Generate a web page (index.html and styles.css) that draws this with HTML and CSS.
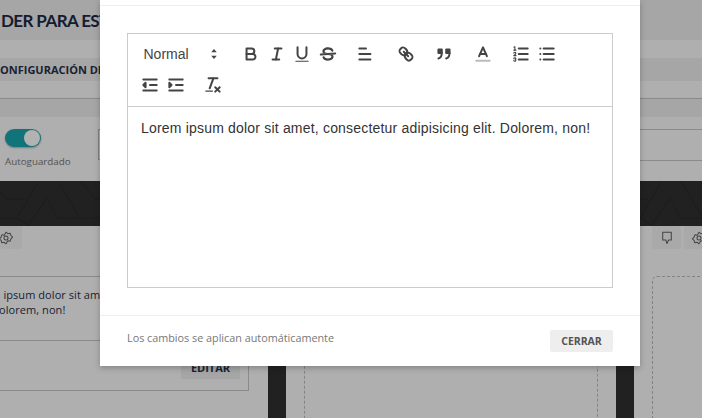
FILE: index.html
```html
<!DOCTYPE html>
<html lang="es">
<head>
<meta charset="utf-8">
<title>Editor</title>
<link rel="stylesheet" href="styles.css">
</head>
<body>
<div class="page">
  <header class="title-bar"><h1 class="title">DER PARA ESTE</h1></header>
  <section class="config">
    <span class="config-label">CONFIGURACIÓN DE</span>
  </section>
  <div class="strip"></div>
  <section class="controls">
    <div class="auto">
      <span class="toggle"><span class="knob"></span></span>
      <span class="auto-label">Autoguardado</span>
    </div>
    <div class="ctl-box"></div>
    <div class="ctl-lines"></div>
  </section>
  <div class="hero">
    <svg class="hero-art" width="702" height="45">
      <defs>
        <pattern id="hex" width="89" height="45" patternUnits="userSpaceOnUse">
          <path d="M6 18H25M0 37H17L38 1M17 37L30 45M47 17L28 45M47 17L57 37H89M58 0L80 37M80 0L89 10M0 10L6 18" class="hex-line"/>
        </pattern>
      </defs>
      <rect width="702" height="45" fill="url(#hex)"/>
    </svg>
  </div>
  <main class="board">
    <div class="col col-a">
      <div class="tools">
        <span class="tool tool-a">
          <svg class="tool-ic" viewBox="0 0 18 18"><circle class="tl" cx="9" cy="9" r="2.600"/><path class="tl" d="M9 1.500l2.300 2 3-.6 1 2.900 2.200 2.200-2.200 2.200-1 2.900-3-.6L9 16.500l-2.300-2-3 .6-1-2.900L.500 10l2.200-2.200 1-2.900 3 .6z"/></svg>
        </span>
      </div>
      <article class="card">
        <p class="card-text"><span class="line">Lorem ipsum dolor sit amet,</span><span class="line line-two">Dolorem, non!</span></p>
        <div class="card-foot"><span class="edit">EDITAR</span></div>
      </article>
    </div>
    <div class="col col-b"><div class="drop"></div></div>
    <div class="col col-c">
      <div class="tools tools-c">
        <span class="tool">
          <svg class="tool-ic" viewBox="0 0 18 18"><path class="tl" d="M3.500 1.500h11v10h-3.500l-2 4.500-1.500-4.500H3.500z"/></svg>
        </span>
        <span class="tool">
          <svg class="tool-ic" viewBox="0 0 18 18"><circle class="tl" cx="9" cy="9" r="2.600"/><path class="tl" d="M9 1.500l2.300 2 3-.6 1 2.900 2.200 2.200-2.200 2.200-1 2.900-3-.6L9 16.500l-2.300-2-3 .6-1-2.900L.500 10l2.200-2.200 1-2.900 3 .6z"/></svg>
        </span>
      </div>
      <div class="drop drop-c"></div>
    </div>
  </main>
</div>
<div class="overlay"></div>
<div class="modal">
  <div class="modal-head"></div>
  <div class="modal-body">
    <div class="editor">
      <div class="toolbar">
        <div class="tb-row">
          <div class="picker">
            <span class="picker-label">Normal</span>
            <svg class="ic picker-arrows" viewBox="0 0 18 18"><polygon class="fl" points="6.500 10.500 9 13.500 11.500 10.500"/><polygon class="fl" points="6.500 7.500 9 4.500 11.500 7.500"/></svg>
          </div>
          <div class="grp">
            <span class="btn"><svg class="ic" viewBox="0 0 18 18"><path class="st" d="M5,4H9.500A2.500,2.500,0,0,1,12,6.500v0A2.500,2.500,0,0,1,9.500,9H5A0,0,0,0,1,5,9V4A0,0,0,0,1,5,4Z"/><path class="st" d="M5,9h5.500A2.500,2.500,0,0,1,13,11.500v0A2.500,2.500,0,0,1,10.500,14H5a0,0,0,0,1,0,0V9A0,0,0,0,1,5,9Z"/></svg></span>
            <span class="btn"><svg class="ic" viewBox="0 0 18 18"><line class="st" x1="7" x2="13" y1="4" y2="4"/><line class="st" x1="5" x2="11" y1="14" y2="14"/><line class="st" x1="8" x2="10" y1="14" y2="4"/></svg></span>
            <span class="btn"><svg class="ic" viewBox="0 0 18 18"><path class="st" d="M5,3V9a4.012,4.012,0,0,0,4,4H9a4.012,4.012,0,0,0,4-4V3"/><rect class="fl" height="1" rx="0.500" ry="0.500" width="12" x="3" y="15"/></svg></span>
            <span class="btn"><svg class="ic" viewBox="0 0 18 18"><line class="st" x1="15.500" x2="2.500" y1="8.500" y2="9.500"/><path class="fl" d="M9.007,8C6.542,7.791,6,7.519,6,6.500,6,5.792,7.283,5,9,5c1.571,0,2.765.679,2.969,1.309a1,1,0,0,0,1.900-.617C13.356,4.106,11.354,3,9,3,6.200,3,4,4.538,4,6.500a3.200,3.200,0,0,0,.5,1.843Z"/><path class="fl" d="M8.984,10C11.457,10.208,12,10.479,12,11.500c0,.708-1.283,1.500-3,1.500-1.571,0-2.765-.679-2.969-1.309a1,1,0,1,0-1.900.617C4.644,13.894,6.646,15,9,15c2.800,0,5-1.538,5-3.500a3.200,3.200,0,0,0-.5-1.843Z"/></svg></span>
          </div>
          <div class="grp grp-align">
            <span class="btn"><svg class="ic" viewBox="0 0 18 18"><line class="st" x1="3" x2="13" y1="9" y2="9"/><line class="st" x1="3" x2="13" y1="14" y2="14"/><line class="st" x1="3" x2="9" y1="4" y2="4"/></svg></span>
          </div>
          <div class="grp">
            <span class="btn"><svg class="ic" viewBox="0 0 18 18"><line class="st" x1="7" x2="11" y1="7" y2="11"/><path class="st" d="M8.900,4.577a3.476,3.476,0,0,1,.36,4.679A3.476,3.476,0,0,1,4.577,8.900C3.185,7.500,2.035,6.400,4.217,4.217S7.500,3.185,8.900,4.577Z"/><path class="st" d="M13.423,9.100a3.476,3.476,0,0,0-4.679-.36,3.476,3.476,0,0,0,.36,4.679c1.392,1.392,2.500,2.542,4.679.36S14.815,10.500,13.423,9.100Z"/></svg></span>
          </div>
          <div class="grp">
            <span class="btn"><svg class="ic" viewBox="0 0 18 18"><rect class="fl st" height="3" width="3" x="4" y="5"/><rect class="fl st" height="3" width="3" x="11" y="5"/><path class="st" d="M7,8c0,4.031-3,5-3,5"/><path class="st" d="M14,8c0,4.031-3,5-3,5"/></svg></span>
          </div>
          <div class="grp">
            <span class="btn"><svg class="ic" viewBox="0 0 18 18"><line class="st label-line" x1="3" x2="15" y1="15" y2="15"/><polyline class="st" points="5.500 11 9 3 12.500 11"/><line class="st" x1="11.630" x2="6.380" y1="9" y2="9"/></svg></span>
          </div>
          <div class="grp">
            <span class="btn"><svg class="ic" viewBox="0 0 18 18"><line class="st" x1="7" x2="15" y1="4" y2="4"/><line class="st" x1="7" x2="15" y1="9" y2="9"/><line class="st" x1="7" x2="15" y1="14" y2="14"/><line class="st thin" x1="2.500" x2="4.500" y1="5.500" y2="5.500"/><path class="fl" d="M3.500,6A0.500,0.500,0,0,1,3,5.500V3.085l-0.276.138A0.500,0.500,0,0,1,2.053,3c-0.124-.247-0.023-0.324.224-0.447l1-.5A0.500,0.500,0,0,1,4,2.500v3A0.500,0.500,0,0,1,3.500,6Z"/><path class="st thin" d="M4.500,10.500h-2c0-.234,1.850-1.076,1.850-2.234A0.959,0.959,0,0,0,2.500,8.156"/><path class="st thin" d="M2.500,14.846a0.959,0.959,0,0,0,1.850-.109A0.700,0.700,0,0,0,3.750,14a0.688,0.688,0,0,0,.6-0.736,0.959,0.959,0,0,0-1.850-.109"/></svg></span>
            <span class="btn"><svg class="ic" viewBox="0 0 18 18"><line class="st" x1="6" x2="15" y1="4" y2="4"/><line class="st" x1="6" x2="15" y1="9" y2="9"/><line class="st" x1="6" x2="15" y1="14" y2="14"/><line class="st" x1="3" x2="3" y1="4" y2="4"/><line class="st" x1="3" x2="3" y1="9" y2="9"/><line class="st" x1="3" x2="3" y1="14" y2="14"/></svg></span>
          </div>
        </div>
        <div class="tb-row">
          <div class="grp grp-indent">
            <span class="btn"><svg class="ic" viewBox="0 0 18 18"><line class="st" x1="3" x2="15" y1="14" y2="14"/><line class="st" x1="3" x2="15" y1="4" y2="4"/><line class="st" x1="9" x2="15" y1="9" y2="9"/><polyline class="fl st" points="5 7 5 11 3 9 5 7"/></svg></span>
            <span class="btn"><svg class="ic" viewBox="0 0 18 18"><line class="st" x1="3" x2="15" y1="14" y2="14"/><line class="st" x1="3" x2="15" y1="4" y2="4"/><line class="st" x1="9" x2="15" y1="9" y2="9"/><polyline class="fl st" points="3 7 3 11 5 9 3 7"/></svg></span>
          </div>
          <div class="grp">
            <span class="btn"><svg class="ic" viewBox="0 0 18 18"><line class="st" x1="5" x2="13" y1="3" y2="3"/><line class="st" x1="6" x2="9.350" y1="12" y2="3"/><line class="st" x1="11" x2="15" y1="11" y2="15"/><line class="st" x1="15" x2="11" y1="11" y2="15"/><rect class="fl" height="1" rx="0.500" ry="0.500" width="7" x="2" y="14"/></svg></span>
          </div>
        </div>
      </div>
      <div class="content">
        <p class="content-text">Lorem ipsum dolor sit amet, consectetur adipisicing elit. Dolorem, non!</p>
      </div>
    </div>
  </div>
  <footer class="modal-foot">
    <span class="foot-note">Los cambios se aplican automáticamente</span>
    <span class="close">CERRAR</span>
  </footer>
</div>
</body>
</html>
```
FILE: styles.css
```css
* { box-sizing: border-box; }
html, body { margin: 0; height: 100%; }
body { width: 702px; height: 418px; overflow: hidden; position: relative; background: #fbfbfb; font-family: "Open Sans", sans-serif; }
.page { width: 702px; height: 418px; overflow: hidden; display: flex; flex-direction: column; }

.title-bar { height: 40px; background: #eee; display: flex; align-items: center; padding-left: 1px; }
.title { margin: 0; font: 700 17px Lato, "Open Sans", sans-serif; letter-spacing: -.6px; color: #1e2a44; white-space: nowrap; }

.config { height: 59px; padding-top: 18px; border-bottom: 1px solid #c6c6c6; }
.config-label { display: block; height: 23px; background: #eee; font: 700 11px/23px "Open Sans", sans-serif; color: #27324a; white-space: nowrap; text-indent: -7px; }

.strip { height: 18px; background: #eee; }

.controls { height: 64px; position: relative; display: flex; padding: 12px 0 0 5px; }
.auto { width: 93px; display: flex; flex-direction: column; align-items: flex-start; }
.toggle { width: 36px; height: 18px; border-radius: 9px; background: #1ba7b0; position: relative; display: block; box-shadow: 0 1px 2px rgba(0,0,0,.3); }
.knob { position: absolute; right: 1px; top: 1px; width: 16px; height: 16px; border-radius: 50%; background: #fff; }
.auto-label { font-size: 9.800px; color: #777; margin-top: 8px; white-space: nowrap; }
.ctl-box { width: 20px; height: 31px; border: 1px solid #bbb; }
.ctl-lines { position: absolute; left: 560px; right: 0; top: 12px; height: 32px; border-top: 1px solid #c6c6c6; border-bottom: 1px solid #c6c6c6; }

.hero { height: 45px; background: #303030; }
.hero-art { display: block; }
.hex-line { fill: none; stroke: #2a2a2a; stroke-width: 1.500; }

.board { height: 192px; display: flex; overflow: hidden; background: linear-gradient(#303030, #303030) 268px 0/18px 100% no-repeat, linear-gradient(#303030, #303030) 616px 0/18px 100% no-repeat; }
.col { flex: none; }
.col-a { width: 268px; }
.col-b { width: 330px; margin-left: 18px; padding: 50px 18px 0; }
.col-c { width: 68px; margin-left: 18px; }

.tools { height: 24px; display: flex; gap: 3px; }
.tools-c { padding-left: 18px; }
.tool { flex: none; width: 29px; height: 23px; background: #f2f2f2; border-radius: 2px; display: flex; align-items: center; justify-content: center; }
.tool-a { width: 22px; justify-content: flex-start; }
.tool-ic { width: 14px; height: 14px; display: block; flex: none; }
.tool-a .tool-ic { margin-left: -1px; }
.tl { fill: none; stroke: #606060; stroke-width: 1.300; stroke-linejoin: round; }
.st { fill: none; stroke: #444; stroke-width: 1.800; stroke-linecap: round; stroke-linejoin: round; }
.fl { fill: #444; }

.card { margin-top: 26px; width: 249px; height: 115px; border: 1px solid #c6c6c6; border-left: 0; display: flex; flex-direction: column; }
.card-text { margin: 10px 0 0; height: 53px; font-size: 11px; line-height: 15px; letter-spacing: .06px; color: #25304a; white-space: nowrap; }
.line { display: block; margin-left: -33px; }
.line-two { margin-left: -9px; }
.card-foot { flex: 1; border-top: 1px solid #c6c6c6; display: flex; justify-content: flex-end; padding: 15px 8px 0 0; }
.edit { width: 59px; height: 23px; background: #eee; text-align: center; font: 700 11px/23px "Open Sans", sans-serif; color: #27324a; }

.drop { width: 294px; height: 300px; border: 1px dashed #bdbdbd; border-radius: 5px; }
.drop-c { width: 100px; margin: 26px 0 0 18px; }

.overlay { position: absolute; inset: 0; background: rgba(0, 0, 0, .3); }

.modal { position: absolute; left: 100px; top: 0; width: 540px; height: 366px; background: #fff; box-shadow: 0 2px 6px rgba(0,0,0,.25); display: flex; flex-direction: column; }
.modal-head { height: 6px; border-bottom: 1px solid #eee; }
.modal-body { height: 309px; padding: 27px 27px 0; }
.editor { height: 255px; border: 1px solid #ccc; display: flex; flex-direction: column; }
.toolbar { height: 73px; padding: 4px 0 0 9.500px; border-bottom: 1px solid #ccc; }
.tb-row { display: flex; align-items: center; height: 31px; }
.picker { width: 88px; margin-right: 13px; height: 24px; display: flex; align-items: center; position: relative; }
.picker-label { font: 14px "Liberation Sans", Arial, sans-serif; color: #444; margin-left: 6px; }
.picker-arrows { position: absolute; left: 66px; top: 2px; }
.grp { display: flex; margin-right: 13px; }
.grp-align { margin-right: 14px; }
.grp-indent { margin-right: 12px; }
.btn { width: 25.500px; height: 24px; display: flex; align-items: center; justify-content: center; }
.ic { width: 20px; height: 20px; display: block; }
.thin { stroke-width: 1; }
.label-line { stroke: #bbb; }
.content { flex: 1; padding: 12px 13px; }
.content-text { margin: 0; font: 14px/19px "Liberation Sans", Arial, sans-serif; color: #333; letter-spacing: .19px; white-space: nowrap; }

.modal-foot { flex: 1; border-top: 1px solid #eee; padding: 14px 27px 0; display: flex; align-items: flex-start; justify-content: space-between; }
.foot-note { font-size: 10.800px; line-height: 16px; color: #777; white-space: nowrap; }
.close { width: 63px; height: 22px; background: #eee; border-radius: 2px; text-align: center; font: 700 10.500px/22px "Open Sans", sans-serif; color: #555; }
```
